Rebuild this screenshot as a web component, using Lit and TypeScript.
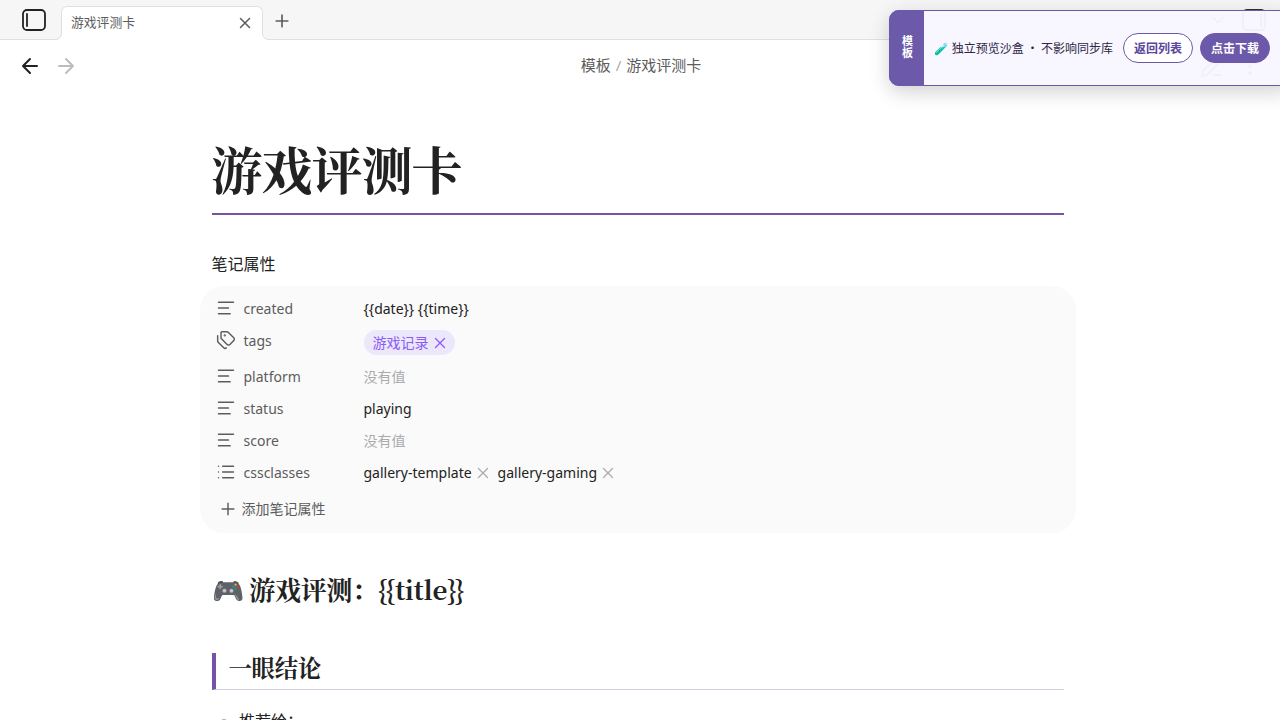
import { LitElement, html, css, svg } from "lit";
import { customElement } from "lit/decorators.js";

const glyphs = {
  x: svg`<path d="M18 6 6 18M6 6l12 12"/>`,
  plus: svg`<path d="M5 12h14M12 5v14"/>`,
  left: svg`<path d="m12 19-7-7 7-7M19 12H5"/>`,
  right: svg`<path d="m12 5 7 7-7 7M5 12h14"/>`,
  down: svg`<path d="m6 9 6 6 6-6"/>`,
  text: svg`<path d="M21 5H3M15 12H3M17 19H3"/>`,
  list: svg`<path d="M8 5h13M8 12h13M8 19h13M3 5h.01M3 12h.01M3 19h.01"/>`,
  tags: svg`<path d="M13.172 2a2 2 0 0 1 1.414.586l6.71 6.71a2.4 2.4 0 0 1 0 3.408l-4.592 4.592a2.4 2.4 0 0 1-3.408 0l-6.71-6.71A2 2 0 0 1 6 9.172V3a1 1 0 0 1 1-1z"/><path d="M2 7v6.172a2 2 0 0 0 .586 1.414l6.71 6.71a2.4 2.4 0 0 0 3.191.193"/><circle cx="10.5" cy="6.5" r=".5" fill="currentColor"/>`,
  pen: svg`<path d="M13 21h8M21.174 6.812a1 1 0 0 0-3.986-3.987L3.842 16.174a2 2 0 0 0-.5.83l-1.321 4.352a.5.5 0 0 0 .623.622l4.353-1.32a2 2 0 0 0 .83-.497z"/>`,
  more: svg`<circle cx="12" cy="5" r="1"/><circle cx="12" cy="12" r="1"/><circle cx="12" cy="19" r="1"/>`,
};
type Glyph = keyof typeof glyphs;

const icon = (name: Glyph, size: number, stroke = 1.75) => html`<svg class="icon" width=${size} height=${size}
  viewBox="0 0 24 24" fill="none" stroke="currentColor" stroke-width=${stroke}
  stroke-linecap="round" stroke-linejoin="round">${glyphs[name]}</svg>`;

const sidebar = (flip: boolean) => html`<svg class="icon" width="24" height="22" viewBox="0 0 24 22" fill="none"
  stroke="currentColor" stroke-width="1.8" stroke-linecap="round">
  <rect x="1" y="1" width="22" height="20" rx="4"/>
  ${flip ? svg`<path d="M19 5v12"/>` : svg`<path d="M5 5v12"/>`}</svg>`;

interface Prop {
  name: string;
  icon: Glyph;
  value?: string;
  tags?: string[];
  items?: string[];
}

const props: Prop[] = [
  { name: "created", icon: "text", value: "{{date}} {{time}}" },
  { name: "tags", icon: "tags", tags: ["游戏记录"] },
  { name: "platform", icon: "text" },
  { name: "status", icon: "text", value: "playing" },
  { name: "score", icon: "text" },
  { name: "cssclasses", icon: "list", items: ["gallery-template", "gallery-gaming"] },
];

@customElement("app-root")
export class AppRoot extends LitElement {
  static styles = css`
    :host { display: block; position: relative; height: 720px; overflow: hidden; background: #fff; color: #222;
      font: 16px/1.5 "Noto Sans", "Noto Sans CJK SC", sans-serif; }
    * { box-sizing: border-box; }
    .icon { display: block; flex: none; }
    .tabbar { display: flex; height: 40px; background: #f6f6f6; border-bottom: 1px solid #e0e0e0; padding-left: 22px; }
    .toggle { display: flex; align-items: center; width: 39px; height: 40px; }
    .tab { position: relative; display: flex; align-items: center; justify-content: space-between; width: 202px; height: 34px; margin-top: 6px;
      padding: 0 8px 2px 9px; background: #fff; border: 1px solid #e0e0e0; border-bottom: 0; border-radius: 6px 6px 0 0; font-size: 12.8px; line-height: 18px; color: #5c5c5c; }
    .tab span { padding-bottom: 2px; }
    .tab::before, .tab::after { content: ""; position: absolute; bottom: 0; width: 7px; height: 7px; }
    .tab::before { left: -7px; background: radial-gradient(circle at 0 0, #f6f6f6 5.7px, #e0e0e0 6.2px 6.8px, #fff 7.2px); }
    .tab::after { right: -7px; background: radial-gradient(circle at 100% 0, #f6f6f6 5.7px, #e0e0e0 6.2px 6.8px, #fff 7.2px); }
    .add { display: flex; align-items: center; padding-left: 9px; color: #5c5c5c; height: 42px; }
    .spacer { flex: 1; }
    .tabtools { display: flex; align-items: center; gap: 14px; height: 40px; padding-right: 14px; color: #333; }
    .header { display: grid; grid-template-columns: 1fr auto 1fr; align-items: center; height: 52px; padding: 0 18px; font-size: 15px; color: #5c5c5c; }
    .nav { display: flex; gap: 12px; color: #222; }
    .dim { color: #bdbdbd; display: block; }
    .crumbs { display: flex; gap: 5px; line-height: 22px; padding: 0 0 2px 2px; }
    .crumbs .sep { color: #ababab; }
    .tools { display: flex; justify-content: flex-end; gap: 14px; color: #444; }
    .note { width: 852px; margin-left: 211.5px; }
    .title, .h1, .h2 { margin: 0; font-family: "Noto Serif CJK SC", "Source Han Serif SC", "Noto Serif SC", serif; font-weight: 700; }
    .title { height: 89px; margin-top: 34px; font-size: 51px; letter-spacing: -1px; line-height: 84px; border-bottom: 2px solid #7851a9; }
    .label { margin-top: 37px; height: 24px; line-height: 24px; }
    .card { width: 876px; height: 247px; margin: 10px 0 0 -12px; padding: 7px 16px 6px; background: #fafafa; border-radius: 24px; font-size: 14px; line-height: 20px; }
    .row { display: flex; height: 32px; }
    .tall { height: 36px; }
    .key { display: flex; align-items: center; gap: 8px; width: 148px; height: 32px; color: #5c5c5c; }
    .key .icon { margin-top: -2px; }
    .val { display: flex; align-items: center; }
    .empty { color: #ababab; }
    .pill { display: flex; align-items: center; gap: 2px; height: 25px; margin-top: -1px; padding: 1px 6px 0 9px; border-radius: 13px; background: #ece7fa; color: #8a5cf5; }
    .pill .icon { margin-top: -1px; }
    .item { display: flex; align-items: center; gap: 2px; margin-right: 6px; }
    .item .icon { color: #ababab; }
    .new { display: flex; align-items: center; gap: 4px; height: 32px; margin-top: 4px; padding-left: 2px; color: #5c5c5c; }
    .h1 { margin-top: 37px; font-size: 26px; letter-spacing: -0.33px; line-height: 38px; }
    .h2 { margin-top: 45px; height: 37px; padding-left: 13px; font-size: 23.4px; letter-spacing: -0.3px; line-height: 29px; border-left: 4px solid #7851a9; border-bottom: 1px solid #d5d0e0; }
    .bullets { margin: 19px 0 0; padding-left: 27.5px; line-height: 24px; }
    .bullets li::marker { color: #ababab; }
    .banner { position: absolute; left: 889px; top: 10px; width: 400px; height: 76px; display: flex; align-items: center;
      border: 1px solid #6c59aa; border-radius: 10px 0 0 10px; background: rgba(248, 246, 255, 0.96); box-shadow: 0 6px 20px rgba(0, 0, 0, 0.18); font-size: 12px; color: #2d2545; }
    .side { width: 35px; height: 76px; margin-left: -1px; border-radius: 10px 0 0 10px; background: #6c59aa; color: #fff; display: flex; align-items: center; justify-content: center;
      padding: 0 0 3px; writing-mode: vertical-rl; font-size: 11px; font-weight: 700; line-height: 14px; letter-spacing: 1px; }
    .msg { width: 190px; padding: 0 0 0 10px; white-space: nowrap; font-family: "Noto Sans CJK SC", sans-serif; }
    .btn { width: 70px; height: 30px; margin-left: 9px; border: 1px solid #6c59aa; border-radius: 15px; background: #fff; color: #5a459c; font-weight: 700; line-height: 29px; text-align: center; white-space: nowrap; }
    .solid { margin-left: 7px; background: #6c59aa; color: #fff; }
  `;

  private value(p: Prop) {
    if (p.tags) return p.tags.map((t) => html`<span class="pill">${t}${icon("x", 18)}</span>`);
    if (p.items) return p.items.map((t) => html`<span class="item">${t}${icon("x", 18)}</span>`);
    return p.value ?? html`<span class="empty">没有值</span>`;
  }

  render() {
    return html`
      <div class="tabbar">
        <div class="toggle">${sidebar(false)}</div>
        <div class="tab"><span>游戏评测卡</span>${icon("x", 18, 2)}</div>
        <div class="add">${icon("plus", 20, 2)}</div>
        <div class="spacer"></div>
        <div class="tabtools">${icon("down", 20)}${sidebar(true)}</div>
      </div>
      <div class="header">
        <div class="nav">${icon("left", 24, 2)}<span class="dim">${icon("right", 24, 2)}</span></div>
        <div class="crumbs"><span>模板</span><span class="sep">/</span><span>游戏评测卡</span></div>
        <div class="tools">${icon("pen", 24)}${icon("more", 24)}</div>
      </div>
      <main class="note">
        <h1 class="title">游戏评测卡</h1>
        <div class="label">笔记属性</div>
        <section class="card">
          ${props.map((p) => html`<div class="row ${p.tags ? "tall" : ""}">
            <div class="key">${icon(p.icon, 20)}<span>${p.name}</span></div>
            <div class="val">${this.value(p)}</div>
          </div>`)}
          <div class="new">${icon("plus", 20)}<span>添加笔记属性</span></div>
        </section>
        <h1 class="h1">🎮 游戏评测：{{title}}</h1>
        <h2 class="h2">一眼结论</h2>
        <ul class="bullets"><li>推荐给：</li></ul>
      </main>
      <aside class="banner">
        <div class="side">模板</div>
        <div class="msg">🧪 独立预览沙盒 · 不影响同步库</div>
        <div class="btn">返回列表</div>
        <div class="btn solid">点击下载</div>
      </aside>`;
  }
}
